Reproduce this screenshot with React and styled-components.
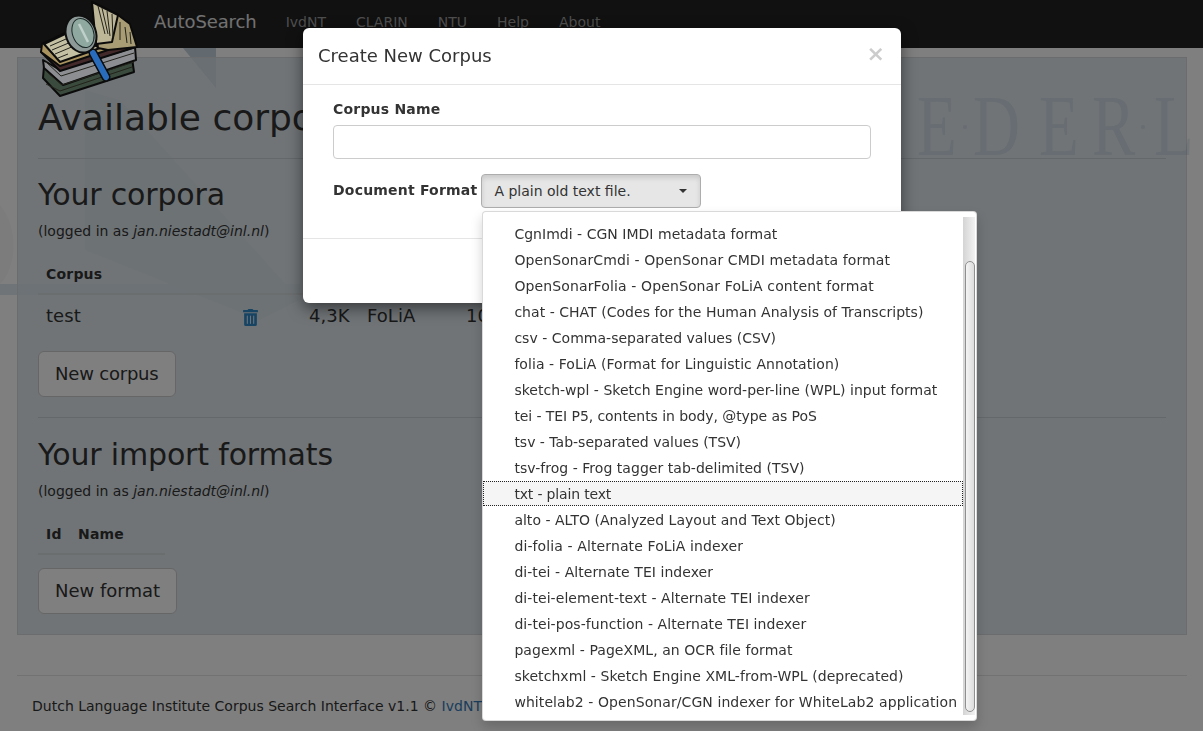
import React from 'react';
import styled, { createGlobalStyle } from 'styled-components';
import { FaTrashAlt } from 'react-icons/fa';

const GlobalStyle = createGlobalStyle`
  html, body {
    margin: 0;
    height: 100%;
    overflow: hidden;
    background: #fff;
    color: #333;
    font-family: "DejaVu Sans", sans-serif;
    font-size: 14px;
    line-height: 20px;
  }
`;

const Page = styled.div`
  position: relative;
  height: 731px;
  overflow: hidden;
`;

const Backdrop = styled.div`
  position: fixed;
  inset: 0;
  z-index: 10;
  background: rgba(0, 0, 0, 0.5);
`;

const BackgroundArt = styled.svg`
  position: absolute;
  inset: 0;
  z-index: ${(p) => p.$layer};
`;

const Navbar = styled.nav`
  position: relative;
  z-index: 1;
  display: flex;
  align-items: center;
  height: 48px;
  padding-left: 154px;
  padding-bottom: 4px;
  box-sizing: border-box;
  background: #222;
`;

const Brand = styled.a`
  font-size: 18px;
  letter-spacing: -0.1px;
  color: #e2e2e2;
  margin-right: 14px;
`;

const NavLink = styled.a`
  padding: 0 15px;
  color: #9d9d9d;
`;

const Logo = styled.svg`
  position: absolute;
  left: 38px;
  top: 0;
  z-index: 11;
`;

const Container = styled.div`
  position: relative;
  z-index: 1;
  width: 1170px;
  margin: 9px 0 0 17px;
`;

const Well = styled.section`
  box-sizing: border-box;
  height: 578px;
  padding: 20px;
  border: 1px solid #d4d8da;
  background: rgba(215, 226, 232, 0.75);
`;

const Title = styled.h1`
  margin: 20px 0 0;
  font-size: 36px;
  font-weight: 400;
  line-height: 40px;
`;

const Rule = styled.hr`
  height: 1px;
  margin: 20px 0 ${(p) => p.$bottom || 20}px;
  border: 0;
  background: #c8d0d4;
`;

const SubTitle = styled.h2`
  margin: 0;
  font-size: 30px;
  font-weight: 400;
  line-height: 33px;
  letter-spacing: -0.16px;
`;

const LoggedIn = styled.p`
  margin: 10px 0 15px;
  font-size: 14px;
`;

const TableRow = styled.div`
  display: grid;
  grid-template-columns: ${(p) => p.$columns};
  width: ${(p) => p.$width};
  box-sizing: border-box;
  padding: ${(p) => (p.$head ? '8px 8px 9px' : '8px')};
  border-bottom: ${(p) => (p.$head ? '2px solid #d6dcdf' : '0')};
  font-size: ${(p) => (p.$head ? '14px' : '18px')};
  font-weight: ${(p) => (p.$head ? 700 : 400)};
  line-height: ${(p) => (p.$head ? '20px' : '26px')};
  letter-spacing: ${(p) => (p.$head ? '0.2px' : '0.05px')};
`;

const TrashLink = styled.a`
  display: flex;
  align-items: center;
  color: #3088c8;
  padding-top: 2px;
`;

const LargeButton = styled.button`
  display: block;
  height: 46px;
  margin-top: ${(p) => p.$top}px;
  padding: 0 16px;
  border: 1px solid #ccc;
  border-radius: 6px;
  background: #fff;
  color: #333;
  font: inherit;
  font-size: 18px;
  letter-spacing: ${(p) => p.$spacing || 0}px;
`;

const FooterRule = styled.hr`
  height: 1px;
  margin: 40px 0 20px;
  border: 0;
  background: #e4e4e4;
`;

const Footer = styled.footer`
  padding-left: 15px;
  line-height: 20px;
  letter-spacing: 0.01px;
`;

const FooterLink = styled.a`
  color: #337ab7;
`;

const ModalLayer = styled.div`
  position: fixed;
  inset: 0;
  z-index: 12;
  padding: 28px 0 0 303px;
`;

const Modal = styled.div`
  width: 598px;
  box-sizing: border-box;
  border-radius: 6px;
  background: #fff;
  box-shadow: 0 5px 15px rgba(0, 0, 0, 0.5);
`;

const ModalHeader = styled.header`
  display: flex;
  align-items: center;
  justify-content: space-between;
  box-sizing: border-box;
  height: 57px;
  padding: 0 16px 0 15px;
  border-bottom: 1px solid #e5e5e5;
`;

const ModalTitle = styled.h4`
  margin: 0;
  font-size: 18px;
  font-weight: 400;
  color: #333;
`;

const CloseButton = styled.span`
  font-size: 22px;
  font-weight: 700;
  color: #ccc;
  margin-top: -4px;
`;

const ModalBody = styled.div`
  box-sizing: border-box;
  height: 154px;
  padding: 14px 30px 0;
  border-bottom: 1px solid #e5e5e5;
`;

const ModalFooter = styled.footer`
  height: 64px;
`;

const Label = styled.label`
  display: block;
  font-weight: 700;
  letter-spacing: 0.2px;
`;

const FormatLabel = styled(Label)`
  margin-top: -2px;
`;

const NameInput = styled.input`
  display: block;
  width: 100%;
  height: 34px;
  box-sizing: border-box;
  margin: 6px 0 15px;
  border: 1px solid #ccc;
  border-radius: 4px;
  outline: none;
`;

const FormatRow = styled.div`
  display: flex;
  align-items: center;
  gap: 4px;
`;

const SelectWrap = styled.div`
  position: relative;
`;

const SelectButton = styled.button`
  display: flex;
  align-items: center;
  justify-content: space-between;
  width: 220px;
  height: 34px;
  padding: 0 12px;
  box-sizing: border-box;
  border: 1px solid #adadad;
  border-radius: 4px;
  background: #e6e6e6;
  box-shadow: inset 0 3px 5px rgba(0, 0, 0, 0.125);
  color: #333;
  font: inherit;
`;

const Caret = styled.span`
  width: 0;
  height: 0;
  border-top: 4px solid #333;
  border-left: 4px solid transparent;
  border-right: 4px solid transparent;
  margin-right: 1px;
`;

const Menu = styled.div`
  position: absolute;
  top: 37px;
  left: 1px;
  display: flex;
  width: 495px;
  height: 510px;
  box-sizing: border-box;
  padding: 5px 1px 5px 0;
  background: #fff;
  border: 1px solid rgba(0, 0, 0, 0.15);
  border-radius: 4px;
  box-shadow: 0 6px 12px rgba(0, 0, 0, 0.175);
`;

const MenuList = styled.ul`
  flex: 1;
  margin: 0;
  padding: 4px 0 0;
  list-style: none;
`;

const MenuItem = styled.li`
  box-sizing: border-box;
  height: 26px;
  padding-left: 31px;
  white-space: nowrap;
  line-height: 26px;
  letter-spacing: ${(p) => p.$spacing}px;
  color: #333;
  ${(p) =>
    p.$active &&
    `
    padding-left: 30px;
    background: #f5f5f5;
    border: 1px dotted #222;
    line-height: 24px;
    height: 25px;
    margin-bottom: 1px;
  `}
`;

const ScrollTrack = styled.div`
  position: relative;
  width: 12px;
  background: linear-gradient(to right, #d4d4d4, #f2f2f2);
`;

const ScrollThumb = styled.div`
  position: absolute;
  left: 2px;
  right: 0;
  top: 44px;
  bottom: 3px;
  border: 1px solid #8f8f8f;
  border-radius: 5px;
  background: linear-gradient(to right, #f4f4f4, #dcdcdc);
`;

const WATERMARK = 'NEDERL';
const WATERMARK_X = [818, 917, 973, 1039, 1092, 1154];
const WATERMARK_FILL = 'rgba(130, 160, 190, 0.2)';

const BackgroundDrawing = () => (
  <BackgroundArt $layer={0} width="1203" height="731" viewBox="0 0 1203 731">
    <polygon points="0,284 300,284 300,295 0,295" fill="#dfe9f0" />
    <path d="M0 205 C20 230 16 268 0 284 Z" fill="#f8f8f8" />
    <polygon points="183,48 216,48 216,88" fill="#c4d2de" />
    <polygon points="85,90 120,100 300,300 260,320 85,250" fill="#e8edf1" />
  </BackgroundArt>
);

const WatermarkDrawing = () => (
  <BackgroundArt $layer={2} width="1203" height="731" viewBox="0 0 1203 731">
    <g transform="translate(0 155) scale(1 1.32) translate(0 -155)">
      {WATERMARK.split('').map((c, i) => (
        <text key={i} x={WATERMARK_X[i]} y="155" fontFamily="'Liberation Serif', serif" fontSize="65" fill={WATERMARK_FILL}>
          {c}
        </text>
      ))}
    </g>
    <circle cx="965" cy="127" r="2" fill={WATERMARK_FILL} />
    <circle cx="1143" cy="127" r="2" fill={WATERMARK_FILL} />
  </BackgroundArt>
);

const BooksLogo = () => (
  <Logo width="104" height="100" viewBox="38 0 104 100">
    <g stroke="#0b0b0b" strokeWidth="2" strokeLinejoin="round">
      {/* stack of books */}
      <polygon points="43,78 60,96 134,72 132,58 62,76 44,66" fill="#3a4a3c" />
      <polygon points="44,68 63,85 136,60 135,47 60,70 43,60" fill="#8c8e92" />
      <polygon points="41,52 60,71 136,47 133,42 70,50" fill="#43292a" />
      {/* open book */}
      <polygon points="41,52 42,44 65,33 82,40 108,50 60,66" fill="#a8925e" />
      <polygon points="44,44 65,34 80,38 100,48 60,62" fill="#c4c0a4" />
      <polygon points="92,2 118,15 130,24 137,47 108,50 98,48" fill="#a89c74" />
      <polygon points="92,2 118,15 112,42 96,44" fill="#bdb798" />
    </g>
    <g stroke="#23231c" strokeWidth="1" fill="none">
      <path d="M50 46 L66 39 M52 50 L71 42 M55 54 L74 46 M58 58 L68 54" />
      <path d="M98 6 L105 34 M102 8 L108 34 M107 11 L110 36 M112 14 L113 38 M120 22 L120 40 M125 27 L127 43 M130 32 L131 44" />
      <path d="M47 72 L62 85 L134 62 M46 84 L60 91 L132 67 M46 62 L61 76 L134 53" />
    </g>
    <g>
      <line x1="93" y1="53" x2="106" y2="77" stroke="#0b0b0b" strokeWidth="9" strokeLinecap="round" />
      <line x1="93" y1="53" x2="106" y2="77" stroke="#2a6cbc" strokeWidth="6" strokeLinecap="round" />
      <ellipse cx="81" cy="34" rx="15" ry="19" transform="rotate(-20 81 34)" fill="#8e9a98" stroke="#0f0f0f" strokeWidth="2" />
      <ellipse cx="83" cy="33" rx="10.5" ry="15" transform="rotate(-20 83 33)" fill="#8fa8a0" stroke="#1c2a28" strokeWidth="1" />
      <path d="M79 24 L88 42" stroke="#c0d0ca" strokeWidth="2.5" />
    </g>
  </Logo>
);

// second value: letter spacing, the reference's hinted text runs a little wider or narrower per line
const FORMATS = [
  ['CgnImdi - CGN IMDI metadata format', 0.025],
  ['OpenSonarCmdi - OpenSonar CMDI metadata format', 0.105],
  ['OpenSonarFolia - OpenSonar FoLiA content format', 0.125],
  ['chat - CHAT (Codes for the Human Analysis of Transcripts)', 0.035],
  ['csv - Comma-separated values (CSV)', 0.025],
  ['folia - FoLiA (Format for Linguistic Annotation)', 0.065],
  ['sketch-wpl - Sketch Engine word-per-line (WPL) input format', 0.015],
  ['tei - TEI P5, contents in body, @type as PoS', -0.075],
  ['tsv - Tab-separated values (TSV)', -0.005],
  ['tsv-frog - Frog tagger tab-delimited (TSV)', 0.035],
  ['txt - plain text', -0.165],
  ['alto - ALTO (Analyzed Layout and Text Object)', 0.015],
  ['di-folia - Alternate FoLiA indexer', 0.115],
  ['di-tei - Alternate TEI indexer', 0.055],
  ['di-tei-element-text - Alternate TEI indexer', 0.065],
  ['di-tei-pos-function - Alternate TEI indexer', 0.065],
  ['pagexml - PageXML, an OCR file format', 0.055],
  ['sketchxml - Sketch Engine XML-from-WPL (deprecated)', 0.065],
  ['whitelab2 - OpenSonar/CGN indexer for WhiteLab2 application', 0.085],
];

const CORPUS_COLUMNS = '196px 67px 58px 99px 60px';

const App = () => (
  <Page>
    <GlobalStyle />
    <BackgroundDrawing />
    <Navbar>
      <Brand>AutoSearch</Brand>
      <NavLink>IvdNT</NavLink>
      <NavLink>CLARIN</NavLink>
      <NavLink>NTU</NavLink>
      <NavLink>Help</NavLink>
      <NavLink>About</NavLink>
    </Navbar>
    <Container>
      <Well>
        <Title>Available corpora</Title>
        <Rule $bottom={19} />
        <SubTitle>Your corpora</SubTitle>
        <LoggedIn>
          (logged in as <em>jan.niestadt@inl.nl</em>)
        </LoggedIn>
        <TableRow $head $columns={CORPUS_COLUMNS} $width="700px">
          <span>Corpus</span>
        </TableRow>
        <TableRow $columns={CORPUS_COLUMNS} $width="700px">
          <span>test</span>
          <TrashLink>
            <FaTrashAlt size={17} />
          </TrashLink>
          <span>4,3K</span>
          <span>FoLiA</span>
          <span>10</span>
        </TableRow>
        <LargeButton $top={14} $spacing={-0.2}>New corpus</LargeButton>
        <Rule />
        <SubTitle>Your import formats</SubTitle>
        <LoggedIn>
          (logged in as <em>jan.niestadt@inl.nl</em>)
        </LoggedIn>
        <TableRow $head $columns="32px 1fr" $width="127px">
          <span>Id</span>
          <span>Name</span>
        </TableRow>
        <LargeButton $top={13}>New format</LargeButton>
      </Well>
      <FooterRule />
      <Footer>
        Dutch Language Institute Corpus Search Interface v1.1 © <FooterLink>IvdNT</FooterLink>
      </Footer>
    </Container>
    <WatermarkDrawing />
    <Backdrop />
    <BooksLogo />
    <ModalLayer>
      <Modal>
        <ModalHeader>
          <ModalTitle>Create New Corpus</ModalTitle>
          <CloseButton>×</CloseButton>
        </ModalHeader>
        <ModalBody>
          <Label>Corpus Name</Label>
          <NameInput type="text" />
          <FormatRow>
            <FormatLabel>Document Format</FormatLabel>
            <SelectWrap>
              <SelectButton>
                A plain old text file.
                <Caret />
              </SelectButton>
              <Menu>
                <MenuList>
                  {FORMATS.map(([label, spacing]) => (
                    <MenuItem key={label} $spacing={spacing} $active={label.startsWith('txt')}>
                      {label}
                    </MenuItem>
                  ))}
                </MenuList>
                <ScrollTrack>
                  <ScrollThumb />
                </ScrollTrack>
              </Menu>
            </SelectWrap>
          </FormatRow>
        </ModalBody>
        <ModalFooter />
      </Modal>
    </ModalLayer>
  </Page>
);

export default App;
